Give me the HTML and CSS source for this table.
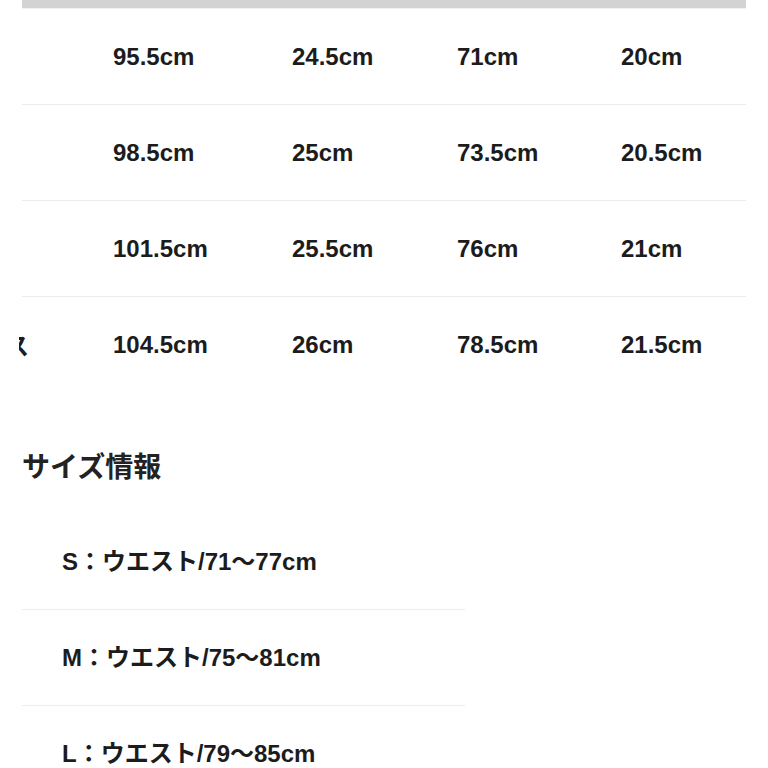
FILE: index.html
```html
<!DOCTYPE html>
<html lang="ja">
<head>
<meta charset="utf-8">
<link rel="stylesheet" href="styles.css">
</head>
<body>
<div class="page">
  <div class="table">
    <div class="thead"></div>
    <div class="row">
      <div class="cell first"></div>
      <div class="cell">95.5cm</div>
      <div class="cell">24.5cm</div>
      <div class="cell">71cm</div>
      <div class="cell">20cm</div>
    </div>
    <div class="row">
      <div class="cell first"></div>
      <div class="cell">98.5cm</div>
      <div class="cell">25cm</div>
      <div class="cell">73.5cm</div>
      <div class="cell">20.5cm</div>
    </div>
    <div class="row">
      <div class="cell first"></div>
      <div class="cell">101.5cm</div>
      <div class="cell">25.5cm</div>
      <div class="cell">76cm</div>
      <div class="cell">21cm</div>
    </div>
    <div class="row last">
      <div class="cell first"><span class="frag"><span class="frag-in">ス</span></span></div>
      <div class="cell">104.5cm</div>
      <div class="cell">26cm</div>
      <div class="cell">78.5cm</div>
      <div class="cell">21.5cm</div>
    </div>
  </div>

  <h2 class="heading">サイズ情報</h2>

  <ul class="sizes">
    <li>S：ウエスト/71〜77cm</li>
    <li>M：ウエスト/75〜81cm</li>
    <li>L：ウエスト/79〜85cm</li>
  </ul>
</div>
</body>
</html>
```

FILE: styles.css
```css
html, body {
  margin: 0;
  padding: 0;
  background: #fff;
}
body {
  font-family: "Liberation Sans", Arial, "Noto Sans CJK JP", sans-serif;
  color: #1c1c1c;
  font-weight: bold;
}
.page {
  padding-left: 22px;
  width: 724px;
}
.table {
  display: flex;
  flex-direction: column;
}
.thead {
  height: 8px;
  background: #d3d3d3;
  border-bottom: 1px solid #f1f1f1;
}
.row {
  display: grid;
  grid-template-columns: 91px 179px 165px 164px 125px;
  border-bottom: 1px solid #ececec;
  align-items: center;
  font-size: 24px;
  box-sizing: border-box;
  height: 96px;
}
.row.last {
  border-bottom: none;
}
.cell {
  white-space: nowrap;
}
.frag {
  display: inline-block;
  width: 10px;
  overflow: hidden;
  margin-left: -3px;
  vertical-align: middle;
}
.frag-in {
  display: inline-block;
  margin-left: -14px;
  font-family: "Noto Sans CJK JP", sans-serif;
  font-size: 24px;
  line-height: 30px;
}
.heading {
  margin: 0;
  height: 121px;
  box-sizing: border-box;
  padding-top: 56px;
  font-family: "Liberation Sans", "Noto Sans CJK JP", sans-serif;
  font-size: 28px;
  line-height: 38px;
  font-weight: bold;
  color: #222;
}
.sizes {
  list-style: none;
  margin: 0;
  padding: 0;
  width: 443px;
}
.sizes li {
  height: 96px;
  box-sizing: border-box;
  border-bottom: 1px solid #ececec;
  display: flex;
  align-items: center;
  padding-left: 40px;
  padding-bottom: 4px;
  font-size: 24px;
  font-family: "Liberation Sans", "Noto Sans CJK JP", sans-serif;
}
```
